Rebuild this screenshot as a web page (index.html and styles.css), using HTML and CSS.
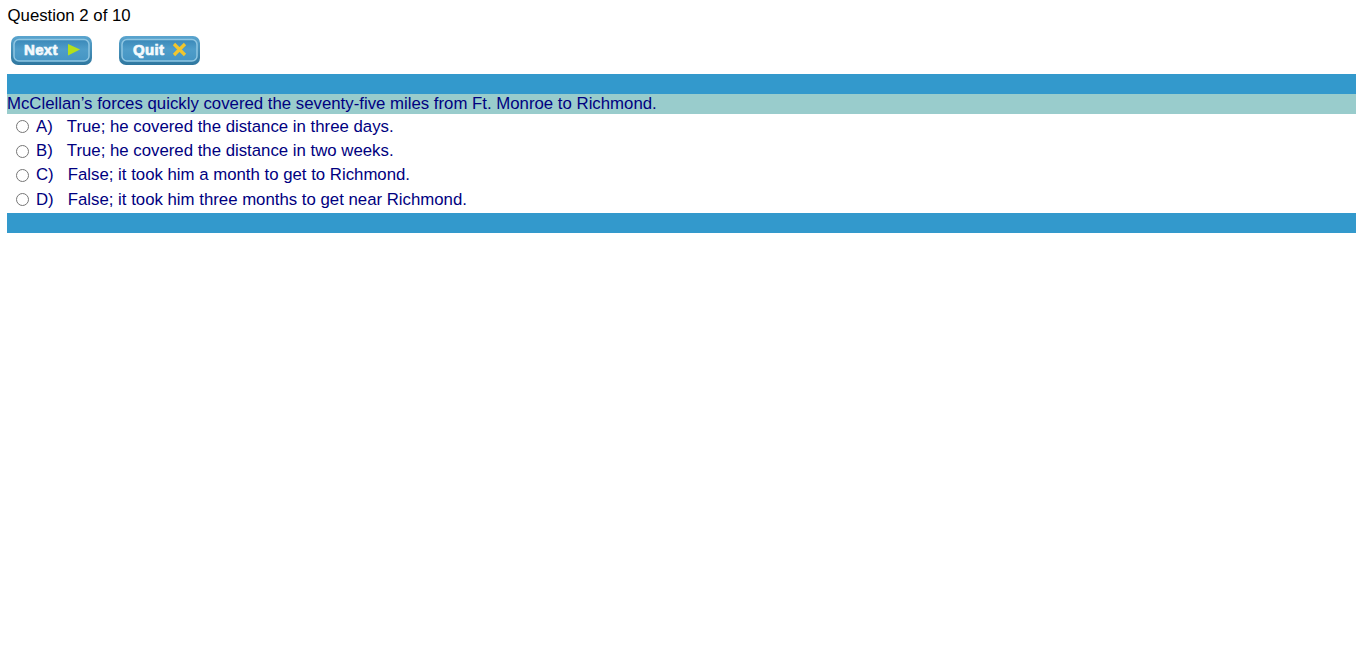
FILE: index.html
```html
<!DOCTYPE html>
<html lang="en">
<head>
<meta charset="utf-8">
<title>Quiz</title>
<link rel="stylesheet" href="styles.css">
</head>
<body>
<div class="counter">Question 2 of 10</div>
<div class="actions">
  <a class="btn" href="#">
    <svg width="81" height="29" viewBox="0 0 81 29">
      <defs>
        <linearGradient id="g1" x1="0" y1="0" x2="0" y2="1"><stop offset="0" stop-color="#3a88b8"/><stop offset="0.45" stop-color="#4f9dc9"/><stop offset="1" stop-color="#4595c4"/></linearGradient>
        <linearGradient id="g0" x1="0" y1="0" x2="0" y2="1"><stop offset="0" stop-color="#5aa5cf"/><stop offset="1" stop-color="#2f779f"/></linearGradient>
      </defs>
      <rect x="0" y="0" width="81" height="29" rx="7" fill="url(#g0)"/>
      <rect x="3" y="3.500" width="75" height="21.500" rx="5" fill="url(#g1)" stroke="#8fc6e2" stroke-width="1.500"/>
      <text x="13" y="18.500" class="btn-label">Next</text>
      <polygon points="57,8 69,13.500 57,19.500" fill="#b4e01c"/>
    </svg>
  </a>
  <a class="btn" href="#">
    <svg width="81" height="29" viewBox="0 0 81 29">
      <rect x="0" y="0" width="81" height="29" rx="7" fill="url(#g0)"/>
      <rect x="3" y="3.500" width="75" height="21.500" rx="5" fill="url(#g1)" stroke="#8fc6e2" stroke-width="1.500"/>
      <text x="14" y="18.500" class="btn-label">Quit</text>
      <path d="M55 8 L66 19 M66 8 L55 19" stroke="#f2c62c" stroke-width="3.200" fill="none"/>
    </svg>
  </a>
</div>
<div class="bar"></div>
<div class="question">McClellan’s forces quickly covered the seventy-five miles from Ft. Monroe to Richmond.</div>
<div class="options">
  <label class="option"><input type="radio" name="q" class="radio"><span class="letter">A)</span><span>True; he covered the distance in three days.</span></label>
  <label class="option"><input type="radio" name="q" class="radio"><span class="letter">B)</span><span>True; he covered the distance in two weeks.</span></label>
  <label class="option"><input type="radio" name="q" class="radio"><span class="letter">C)</span><span>False; it took him a month to get to Richmond.</span></label>
  <label class="option"><input type="radio" name="q" class="radio"><span class="letter">D)</span><span>False; it took him three months to get near Richmond.</span></label>
</div>
<div class="bar"></div>
</body>
</html>
```
FILE: styles.css
```css
html, body { margin: 0; padding: 0; background: #fff; }
body {
  padding: 6px 8px 0 7px;
  font-family: "Liberation Sans", Arial, sans-serif;
  font-size: 16.8px;
  line-height: 20px;
}
.counter { color: #000; height: 20px; padding-left: 0.5px; }
.actions { display: flex; gap: 27px; padding: 10px 0 9px 4px; }
.btn { display: block; width: 81px; height: 29px; }
.btn svg { display: block; }
.btn-label { font-family: "Liberation Sans", sans-serif; font-weight: 700; font-size: 15px; fill: #f4fafd; stroke: #f4fafd; stroke-width: 0.7px; letter-spacing: 0.3px; }
.bar { height: 20px; background: #3399cc; }
.question { height: 20px; background: #99cccc; color: #000080; }
.options { padding-top: 0.7px; height: 99px; box-sizing: border-box; color: #000080; }
.option { display: flex; align-items: center; height: 24.25px; padding-left: 9px; }
.radio { margin: 0 7px 0 0; width: 13px; height: 13px; flex: none; }
.letter { margin-right: 14px; }
```
